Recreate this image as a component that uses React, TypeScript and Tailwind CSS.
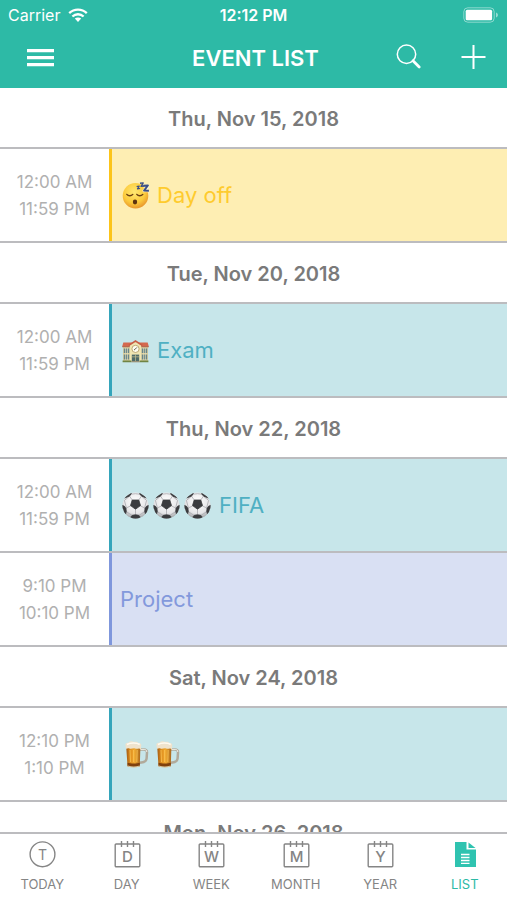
import React, { useState } from 'react';
import clsx from 'clsx';

type EmojiName = 'sleeping' | 'school' | 'soccer' | 'beer';
type Tone = 'yellow' | 'teal' | 'indigo';

interface CalendarEvent {
  start: string;
  end: string;
  emojis: EmojiName[];
  title?: string;
  tone: Tone;
}

interface Day {
  date: string;
  events: CalendarEvent[];
}

const DAYS: Day[] = [
  {
    date: 'Thu, Nov 15, 2018',
    events: [{ start: '12:00 AM', end: '11:59 PM', emojis: ['sleeping'], title: 'Day off', tone: 'yellow' }],
  },
  {
    date: 'Tue, Nov 20, 2018',
    events: [{ start: '12:00 AM', end: '11:59 PM', emojis: ['school'], title: 'Exam', tone: 'teal' }],
  },
  {
    date: 'Thu, Nov 22, 2018',
    events: [
      { start: '12:00 AM', end: '11:59 PM', emojis: ['soccer', 'soccer', 'soccer'], title: 'FIFA', tone: 'teal' },
      { start: '9:10 PM', end: '10:10 PM', emojis: [], title: 'Project', tone: 'indigo' },
    ],
  },
  {
    date: 'Sat, Nov 24, 2018',
    events: [{ start: '12:10 PM', end: '1:10 PM', emojis: ['beer', 'beer'], tone: 'teal' }],
  },
  { date: 'Mon, Nov 26, 2018', events: [] },
];

const TONES: Record<Tone, string> = {
  yellow: 'border-[#fcc419] bg-[#feeeb3] text-[#fecb2e]',
  teal: 'border-[#35a5bb] bg-[#c7e6ea] text-[#4fb0c3]',
  indigo: 'border-[#7f97dc] bg-[#d9e0f3] text-[#8399dc]',
};

const TABS = [
  { label: 'TODAY', letter: 'T' },
  { label: 'DAY', letter: 'D' },
  { label: 'WEEK', letter: 'W' },
  { label: 'MONTH', letter: 'M' },
  { label: 'YEAR', letter: 'Y' },
  { label: 'LIST', letter: '' },
];

function SleepingFace() {
  return (
    <svg viewBox="0 0 31 31" className="w-[31px] h-[31px]" role="img" aria-label="sleeping face">
      <defs>
        <radialGradient id="face" cx="0.45" cy="0.35" r="0.65">
          <stop offset="0" stopColor="#ffe873" />
          <stop offset="0.65" stopColor="#fccb3c" />
          <stop offset="1" stopColor="#e8962c" />
        </radialGradient>
      </defs>
      <circle cx="15.5" cy="15.8" r="12.8" fill="url(#face)" />
      <path d="M6.8 14.4c1.5 1.8 4.4 1.8 6 0M16.8 14.4c1.5 1.8 4.4 1.8 6 0" fill="none" stroke="#6b4011" strokeWidth="1.4" strokeLinecap="round" />
      <ellipse cx="15" cy="22" rx="2.2" ry="2.4" fill="#5c3310" />
      <g fill="none" stroke="#fff" strokeWidth="3" strokeLinejoin="round" opacity="0.6">
        <path d="M23.3 6.2h4.4l-3.8 4.6h4.4" />
      </g>
      <g fill="none" stroke="#3c4f86" strokeLinejoin="round">
        <path d="M16.6 6.5l2.6-.4-1.7 2.8 2.6-.4" strokeWidth="1.2" />
        <path d="M20 3.3l3.2-.4-2.1 3.5 3.2-.4" strokeWidth="1.4" />
        <path d="M23.3 5.7l4.6-.2-3.8 5 4.8.2" strokeWidth="2" />
      </g>
    </svg>
  );
}

function School() {
  return (
    <svg viewBox="0 0 31 31" className="w-[31px] h-[31px]" role="img" aria-label="school">
      <g transform="translate(0 2)">
        <path d="M3 8.5h25v16H3z" fill="#d9cfa0" />
        <path d="M3.3 5.6h24.4l1.1 3.9H2.2z" fill="#d4694e" />
        <path d="M2.2 9.3h26.6v.9H2.2z" fill="#a9533f" />
        <path d="M3.8 11.5h5.4v4.6H3.8zM3.8 17.5h5.4v5H3.8zM21.8 11.5h5.4v4.6h-5.4zM21.8 17.5h5.4v5h-5.4z" fill="#68858a" />
        <path d="M5.6 11v12M7.5 11v12M23.6 11v12M25.4 11v12" stroke="#e8dfb7" strokeWidth="0.7" />
        <path d="M9.8 8.3 15.5 4l5.7 4.3v16.2H9.8z" fill="#f0e5b2" />
        <path d="M8.8 8.4 15.5 4l6.7 4.4" fill="none" stroke="#c85d45" strokeWidth="1.5" />
        <circle cx="15.5" cy="11.9" r="3.6" fill="#fffdf0" stroke="#ae955a" strokeWidth="0.8" />
        <path d="M14 13l1.5-1.1 1.4-1.5" fill="none" stroke="#54503c" strokeWidth="0.9" />
        <path d="M11.8 17.6h7.4v6.9h-7.4z" fill="#506b69" />
        <path d="M15.5 17.6v6.9M11.8 19.8h7.4" stroke="#c5c191" strokeWidth="0.7" />
        <path d="M2.6 23.4h8.8v1.9H2.6zM19.6 23.4h8.8v1.9h-8.8z" fill="#6f8444" />
        <path d="M11.4 24.2h8.2v1.1h-8.2z" fill="#998c73" />
      </g>
    </svg>
  );
}

function SoccerBall() {
  return (
    <svg viewBox="0 0 31 31" className="w-[31px] h-[31px]" role="img" aria-label="soccer ball">
      <defs>
        <radialGradient id="ball" cx="0.5" cy="0.35" r="0.65">
          <stop offset="0" stopColor="#ffffff" />
          <stop offset="0.7" stopColor="#e6e6e8" />
          <stop offset="1" stopColor="#a3a5a8" />
        </radialGradient>
        <clipPath id="ball-clip">
          <circle cx="15.5" cy="15.5" r="13" />
        </clipPath>
      </defs>
      <circle cx="15.5" cy="15.5" r="13" fill="url(#ball)" />
      <g clipPath="url(#ball-clip)">
        <path
          d="M12.2 10 9.6 6.2M18.8 10l2.6-3.8M20.3 15.9l4.3 2M15.5 19.6v5.2M10.7 15.9l-4.3 2M9.6 6.2 4.4 10.4M21.4 6.2l5.2 4.2M6.4 17.9l-2-7.5M24.6 17.9l2-7.5M6.8 22l5.2 3.4M24.2 22 19 25.4M11.5 4.2q4-1 8 0"
          fill="none"
          stroke="#a9aaae"
          strokeWidth="0.8"
        />
        <g fill="#3b3c3f" stroke="#3b3c3f" strokeWidth="0.8" strokeLinejoin="round">
          <path d="M12.2 10h6.6l1.7 5.6-5 3.6-5-3.6z" />
          <path d="M11.6 2.4 11 4.4 9.2 6.2 5.5 7.7 4.4 8z" />
          <path d="M19.4 2.4l.6 2 1.8 1.8 3.7 1.5 1.1.3z" />
          <path d="M2 15.5l2.3.6 1.6 2.2.4 3.3-.8 2.4L2 21z" />
          <path d="M29 15.5l-2.3.6-1.6 2.2-.4 3.3.8 2.4L29 21z" />
          <path d="M12.3 25.3l3.2-.5 3.2.5 1.5 1.7-1.6 2.2h-6.2L10.8 27z" />
        </g>
      </g>
    </svg>
  );
}

function BeerMug() {
  return (
    <svg viewBox="0 0 31 31" className="w-[31px] h-[31px]" role="img" aria-label="beer mug">
      <defs>
        <linearGradient id="beer" x1="0" x2="1" y1="0" y2="0">
          <stop offset="0" stopColor="#a35a12" />
          <stop offset="0.3" stopColor="#e0901f" />
          <stop offset="0.6" stopColor="#f0aa32" />
          <stop offset="1" stopColor="#a8651b" />
        </linearGradient>
      </defs>
      <path d="M19.5 10.5h4.6c2 0 3 1.2 2.9 3l-.4 6c-.2 2-1.8 3.4-3.8 3.7l-3.3.5" fill="none" stroke="#b1aa9b" strokeWidth="2.5" />
      <path d="M19.8 10.4h4.4c1.6 0 2.6.9 2.6 2.6" fill="none" stroke="#efeee7" strokeWidth="1" />
      <path d="M6.2 7.4h14.2l-.6 19.4c0 1.4-12.3 1.4-12.3 0z" fill="url(#beer)" />
      <path d="M10 11l.5 12M13.6 11v12M17.2 11l-.4 12" stroke="#ffcb5c" strokeWidth="1" opacity="0.7" />
      <path d="M7.5 23.7c3.5 1 9 1 12.4 0l-.1 3.5c-3.2 1.1-9.1 1.1-12.2 0z" fill="#80410d" />
      <path d="M7.6 27.1c3.2 1.1 9 1.1 12.2 0" fill="none" stroke="#d8c7a0" strokeWidth="1.1" />
      <path d="M5.5 6.4c-.6-2 1.3-3 3-2.6 1.4-2 4.5-1.8 5.6-.7 2-.8 3.7-.1 4.2 1 2.1-.2 3.5 1.3 2.9 3l-.3 3.1c-2-1.5-3.8.2-5.7-.6-2.3-1-3.6 1-5.8-.1-1.4-.7-2.4.3-3.4.2z" fill="#efe3cd" />
      <path d="M7 5.5c3.5-2 9.7-1.9 12.7 0" fill="none" stroke="#fffaf0" strokeWidth="1.5" />
    </svg>
  );
}

const EMOJIS: Record<EmojiName, React.FC> = {
  sleeping: SleepingFace,
  school: School,
  soccer: SoccerBall,
  beer: BeerMug,
};

function TabIcon({ letter }: { letter: string }) {
  if (!letter) {
    return (
      <svg viewBox="0 0 28 28" className="w-7 h-7" aria-hidden="true">
        <path d="M4 2h11.5v7.5H25V27H4z" fill="#2fc3b0" />
        <path d="M17.5 2.5 24.5 8h-7z" fill="#2fc3b0" />
        <path d="M10 14.5h8.5M10 17.5h8.5M10 20.5h8.5M10 23.3h8.5" stroke="#fff" strokeWidth="1.3" />
      </svg>
    );
  }
  if (letter === 'T') {
    return (
      <svg viewBox="0 0 28 28" className="w-7 h-7" aria-hidden="true">
        <circle cx="14.5" cy="14.3" r="12.4" fill="none" stroke="currentColor" strokeWidth="1.4" />
        <text x="14.5" y="19.5" fontSize="14" textAnchor="middle" fill="currentColor">{letter}</text>
      </svg>
    );
  }
  return (
    <svg viewBox="0 0 28 28" className="w-7 h-7" aria-hidden="true">
      <rect x="2.2" y="4" width="24.6" height="22.8" rx="1" fill="none" stroke="currentColor" strokeWidth="1.4" />
      <path d="M8.5 1v6M14.5 1v6M20.5 1v6" stroke="currentColor" strokeWidth="1.4" />
      <text x="14.5" y="22" fontSize="15" fontWeight="500" textAnchor="middle" fill="currentColor">{letter}</text>
    </svg>
  );
}

function StatusBar() {
  return (
    <div className="grid grid-cols-3 items-center h-[30px] px-2 text-base leading-5">
      <div className="flex items-center gap-2">
        <span>Carrier</span>
        <svg viewBox="0 0 20 14" className="w-5 h-3.5" aria-label="Wi-Fi">
          <path d="M1.2 5.2c5-4.8 12.6-4.8 17.6 0M4.4 8.5c3.2-3 8-3 11.2 0" fill="none" stroke="#fff" strokeWidth="2.3" />
          <path d="M6.8 10.6c1.9-1.6 4.5-1.6 6.4 0L10 13.9z" fill="#fff" />
        </svg>
      </div>
      <span className="text-center font-semibold">12:12 PM</span>
      <svg viewBox="0 0 36 16" className="w-9 h-4 justify-self-end" aria-label="Battery full">
        <rect x="0.8" y="0.8" width="30.4" height="14.4" rx="4" fill="none" stroke="#fff" strokeOpacity="0.45" />
        <rect x="2.7" y="2.7" width="26.4" height="10.6" rx="1.5" fill="#fff" />
        <path d="M33 5.5c2.6 1 2.6 4 0 5z" fill="#fff" fillOpacity="0.5" />
      </svg>
    </div>
  );
}

function Header() {
  return (
    <header className="shrink-0 h-[88px] bg-[#2dbaa6] text-white">
      <StatusBar />
      <div className="grid grid-cols-[1fr_auto_1fr] items-center h-14 pl-6 pr-5">
        <button type="button" aria-label="Menu" className="w-8 h-8 cursor-pointer">
          <svg viewBox="0 0 32 32" className="w-8 h-8">
            <path d="M3 8.7h27M3 15.7h27M3 22.7h27" stroke="#fff" strokeWidth="3.2" />
          </svg>
        </button>
        <h1 className="text-[22px] leading-7 font-semibold">EVENT LIST</h1>
        <div className="flex items-center justify-end gap-9">
          <button type="button" aria-label="Search" className="w-7 h-7 cursor-pointer">
            <svg viewBox="0 0 28 28" className="w-7 h-7">
              <circle cx="11.5" cy="10.2" r="9.2" fill="none" stroke="#fff" strokeWidth="1.5" />
              <path d="M18 16.7l6.2 6.2" stroke="#fff" strokeWidth="2.8" strokeLinecap="round" />
            </svg>
          </button>
          <button type="button" aria-label="Add event" className="w-7 h-7 cursor-pointer">
            <svg viewBox="0 0 28 28" className="w-7 h-7">
              <path d="M14.5 1v24M2.5 13h24" stroke="#fff" strokeWidth="2" />
            </svg>
          </button>
        </div>
      </div>
    </header>
  );
}

function EventRow({ event }: { event: CalendarEvent }) {
  return (
    <li className="flex h-[94px] border-b-2 border-[#bcbcbf]">
      <div className="w-[109px] shrink-0 flex flex-col justify-center pt-0.5 text-center text-[17px] leading-[27px] text-[#b0b0b0]">
        <span>{event.start}</span>
        <span>{event.end}</span>
      </div>
      <div className={clsx('flex-1 flex items-center gap-1.5 border-l-[3px] pl-2', TONES[event.tone])}>
        {event.emojis.length > 0 && (
          <span className="flex">
            {event.emojis.map((name, idx) => {
              const Emoji = EMOJIS[name];
              return <Emoji key={idx} />;
            })}
          </span>
        )}
        {event.title && <span className="text-[22px] leading-7">{event.title}</span>}
      </div>
    </li>
  );
}

export default function App() {
  const [activeTab, setActiveTab] = useState('LIST');

  return (
    <div className="flex flex-col h-screen bg-white font-['Inter',sans-serif]">
      <Header />

      <main className="flex-1 min-h-0 overflow-y-auto [scrollbar-width:none]">
        {DAYS.map((day) => (
          <section key={day.date}>
            <h2 className="flex items-center justify-center h-[61px] pt-0.5 border-b-2 border-[#bcbcbf] text-xl font-semibold text-[#7a7a7a]">
              {day.date}
            </h2>
            <ul>
              {day.events.map((event) => (
                <EventRow key={event.start} event={event} />
              ))}
            </ul>
          </section>
        ))}
      </main>

      {/* Bottom tab bar */}
      <nav className="shrink-0 grid grid-cols-6 h-[68px] border-t-2 border-[#bcbcbf] bg-white">
        {TABS.map((tab) => (
          <button
            key={tab.label}
            type="button"
            onClick={() => setActiveTab(tab.label)}
            className={clsx(
              'flex flex-col items-center gap-2 pt-1.5 text-[13px] leading-4 cursor-pointer',
              activeTab === tab.label ? 'text-[#2dbaa6]' : 'text-[#858585]'
            )}
          >
            <TabIcon letter={tab.letter} />
            <span>{tab.label}</span>
          </button>
        ))}
      </nav>
    </div>
  );
}
